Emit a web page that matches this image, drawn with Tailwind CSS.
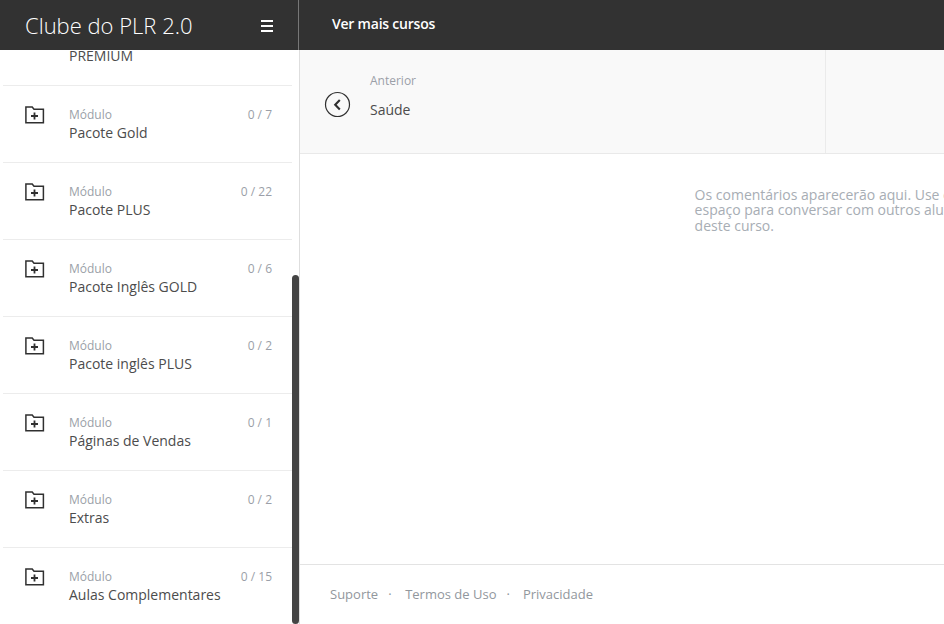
<!DOCTYPE html>
<html lang="pt-BR">
<head>
<meta charset="utf-8">
<title>Clube do PLR 2.0</title>
<script src="https://cdn.jsdelivr.net/npm/@tailwindcss/browser@4"></script>
</head>
<body class="flex h-[624px] w-[944px] flex-col overflow-hidden bg-white font-['Open_Sans','Noto_Sans',sans-serif] text-[14px] text-[#4c4c4c]">
<svg class="hidden">
  <symbol id="folder" viewBox="0 0 20 18">
    <path d="M.9 16.7V1h6.3l1.8 2.3h9.4v13.4z" fill="none" stroke="#303030" stroke-width="1.5"/>
    <path d="M9.5 6.5v7M6 10h7" fill="none" stroke="#303030" stroke-width="1.8"/>
  </symbol>
</svg>
<header class="flex h-[50px] shrink-0 bg-[#323232] text-white">
  <div class="flex w-[299px] shrink-0 items-center justify-between border-r border-[#777] pr-[25px] pl-[25px]">
    <h1 class="text-[22px] leading-[32px] font-light whitespace-nowrap">Clube do PLR 2.0</h1>
    <svg class="mt-[2px] h-3 w-3" viewBox="0 0 12 12" fill="#fff"><path d="M0 0h12v2H0zM0 5h12v2H0zM0 10h12v2H0z"/></svg>
  </div>
  <nav class="pt-[14px] pl-[33px] text-[14px] leading-[20px] font-semibold tracking-[-0.22px]"><a>Ver mais cursos</a></nav>
</header>
<div class="flex min-h-0 flex-1">
  <aside class="flex w-[300px] shrink-0 overflow-hidden border-r border-[#dedede]">
    <ul id="modules" class="w-[292px] shrink-0 pl-[3px]">
      <li class="flow-root h-[36px] border-b border-[#ececec] pl-[66px]"><p class="-mt-[4px] leading-[20px]">PREMIUM</p></li>
    </ul>
    <div class="mt-[225px] h-[349px] w-[7px] shrink-0 rounded-full bg-[#444]"></div>
  </aside>
  <main class="flex min-w-0 flex-1 flex-col">
    <section class="flex h-[104px] shrink-0 border-b border-[#e9e9e9] bg-[#f9f9f9]">
      <div class="flex w-[526px] shrink-0 border-r border-[#ebebeb] pl-[24px]">
        <svg class="mt-[41px] h-[27px] w-[27px]" viewBox="0 0 27 27" fill="none" stroke="#303030"><circle cx="13.5" cy="13.5" r="12" stroke-width="1.2"/><path d="M15.8 9 11.2 13.8l4.6 4.8" stroke-width="2.1"/></svg>
        <div class="pl-[19px]">
          <p class="mt-[21px] text-[12px] leading-[20px] text-[#9b9fa8]">Anterior</p>
          <p class="mt-[9px] text-[14px] leading-[20px]">Saúde</p>
        </div>
      </div>
    </section>
    <section class="flex-1 pt-[33px] pl-[394.6px] text-[14px] leading-[15.4px] whitespace-nowrap text-[#a7adb4]">
      <p>Os comentários aparecerão aqui. Use este<br>espaço para conversar com outros alunos<br>deste curso.</p>
    </section>
    <footer class="flex h-[60px] shrink-0 border-t border-[#e3e3e3] pt-[19px] pl-[30px] text-[13px] leading-[20px] text-[#92979d]">
      <a>Suporte</a><span class="w-[27px] pl-[10px]">·</span><a>Termos de Uso</a><span class="w-[26.5px] pl-[10px]">·</span><a>Privacidade</a>
    </footer>
  </main>
</div>
<template id="module-row">
  <li class="flex h-[77px] items-start border-b border-[#ececec] pt-[19px] pr-[20px] pl-[22px]">
    <svg class="mt-[1px] h-[18px] w-[20px] shrink-0"><use href="#folder"/></svg>
    <div class="flex-1 pl-[24px]">
      <p class="text-[12px] leading-[20px] text-[#9b9fa8]">Módulo</p>
      <p data-name class="-mt-[2px] leading-[20px] whitespace-nowrap"></p>
    </div>
    <span data-count class="text-[12px] leading-[20px] text-[#9b9fa8]"></span>
  </li>
</template>
<script>
const rows = [['Pacote Gold', 7], ['Pacote PLUS', 22], ['Pacote Inglês GOLD', 6], ['Pacote inglês PLUS', 2], ['Páginas de Vendas', 1], ['Extras', 2], ['Aulas Complementares', 15]];
const list = document.getElementById('modules');
for (const [name, total] of rows) {
  const row = document.getElementById('module-row').content.cloneNode(true);
  row.querySelector('[data-name]').textContent = name;
  row.querySelector('[data-count]').textContent = '0 / ' + total;
  list.append(row);
}
</script>
</body>
</html>
